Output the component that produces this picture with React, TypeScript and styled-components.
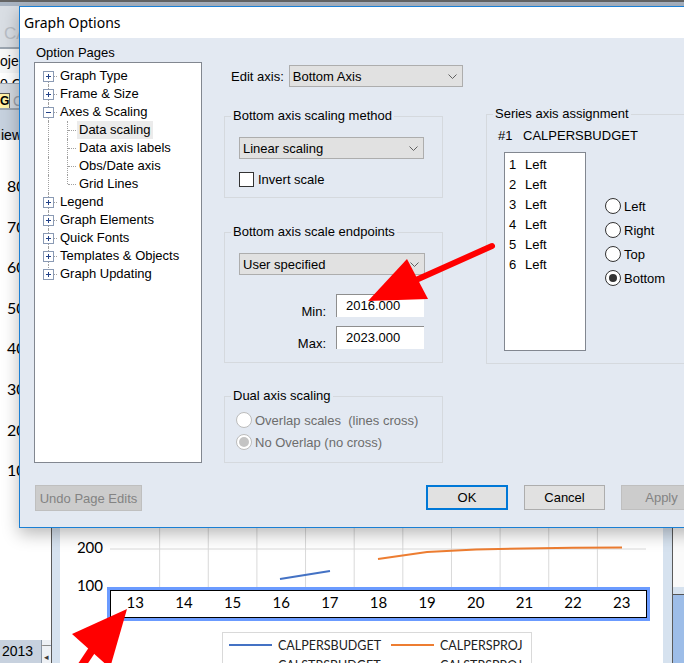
import React from 'react'
import styled, { createGlobalStyle } from 'styled-components'

const UI = `"Liberation Sans", Arial, sans-serif`
const CHART = `Lato, "Liberation Sans", sans-serif`

const GlobalStyle = createGlobalStyle`
  html, body { margin: 0; padding: 0; }
  body { background: #ffffff; overflow: hidden; }
  * { box-sizing: border-box; }
`

type OptionPage = { label: string; open?: boolean; children?: string[] }

const PAGES: OptionPage[] = [
    { label: 'Graph Type' },
    { label: 'Frame & Size' },
    { label: 'Axes & Scaling', open: true, children: ['Data scaling', 'Data axis labels', 'Obs/Date axis', 'Grid Lines'] },
    { label: 'Legend' },
    { label: 'Graph Elements' },
    { label: 'Quick Fonts' },
    { label: 'Templates & Objects' },
    { label: 'Graph Updating' },
]
const SELECTED_PAGE = 'Data scaling'
const SERIES = [1, 2, 3, 4, 5, 6]
const YEARS = [13, 14, 15, 16, 17, 18, 19, 20, 21, 22, 23]
const SIDE_TICKS = ['80', '70', '60', '50', '40', '30', '20', '10']

/* ---------- background application ---------- */

const Page = styled.div`
    position: relative;
    width: 684px;
    height: 663px;
    overflow: hidden;
    display: flex;
    flex-direction: column;
    background: #ffffff;
    font-family: ${UI};
    color: #000;
`

const TopStrip = styled.div`
    flex: none;
    height: 6px;
    background: linear-gradient(#646464 0 2px, #aab5c3 2px);
`

const Ribbon = styled.div`
    flex: none;
    display: flex;
    flex-direction: column;
`

const RibbonBand = styled.div<{ $h: number; $bg: string; $pad: number }>`
    flex: none;
    display: flex;
    align-items: flex-start;
    gap: 3px;
    height: ${p => p.$h}px;
    padding-top: ${p => p.$pad}px;
    background: ${p => p.$bg};
    overflow: hidden;
    white-space: nowrap;
`

const RibbonRule = styled.div<{ $h: number }>`
    flex: none;
    height: ${p => p.$h}px;
    background: #9ba5b0;
`

const BandText = styled.span<{ $color?: string; $size?: number; $indent?: number }>`
    padding-left: ${p => p.$indent ?? 0}px;
    font-size: ${p => p.$size ?? 14}px;
    line-height: 16px;
    color: ${p => p.$color ?? '#000'};
`

const KeyTip = styled.span`
    flex: none;
    width: 10px;
    height: 17px;
    padding-right: 1px;
    text-align: right;
    font-size: 12px;
    font-weight: bold;
    line-height: 15px;
    background: #fff2a6;
    border: 1px solid #5a5a5a;
    border-left: none;
    overflow: hidden;
`

const Workspace = styled.div`
    flex: 1;
    display: flex;
    min-height: 0;
`

const SidePane = styled.div`
    flex: none;
    width: 52px;
    display: flex;
    flex-direction: column;
    border-right: 1px solid #5a5a5a;
    background: #fff;
`

const SideTicks = styled.div`
    padding-top: 26px;
    font-family: ${CHART};
    font-size: 16px;
`

const SideTick = styled.div`
    height: 40.6px;
    line-height: 40.6px;
    padding-left: 7px;
`

const SheetBar = styled.div`
    margin-top: auto;
    display: flex;
    height: 23px;
`

const SheetTab = styled.div`
    width: 42px;
    padding-left: 2px;
    font-size: 14px;
    line-height: 23px;
    background: #c7d1de;
`

const SheetSpin = styled.div`
    flex: 1;
    display: flex;
    flex-direction: column;
    align-items: center;
    justify-content: space-around;
    font-size: 9px;
    line-height: 9px;
    color: #3a3a3a;
    background: #eef1f5;
    border-left: 1px solid #8a96a5;
`

const ChartFrame = styled.div`
    flex: 1;
    display: flex;
    padding: 0 9px 0 8px;
    background: #d6e2ef;
`

const ChartPane = styled.div`
    flex: 1;
    display: flex;
    flex-direction: column;
    background: #fff;
`

const PlotSvg = styled.svg`
    display: block;
    flex: none;
    overflow: visible;
`

const AxisBox = styled.div`
    flex: none;
    width: 543px;
    height: 34px;
    margin-left: 47px;
    border: 3px solid #6b9bff;
`

const AxisInner = styled.div`
    height: 100%;
    display: grid;
    grid-template-columns: repeat(11, 1fr);
    align-items: center;
    padding-bottom: 4px;
    border: 1px solid #000;
    font-family: ${CHART};
    font-size: 15px;
    text-align: center;
`

const Legend = styled.div`
    flex: none;
    width: 310px;
    margin: 11px 0 0 162px;
    padding: 2px 0 0 6px;
    display: grid;
    grid-template-columns: 162px 1fr;
    border: 1px solid #d9d9d9;
`

const LegendItem = styled.div`
    display: flex;
    align-items: center;
    gap: 6px;
    height: 20px;
    font-family: ${CHART};
    font-size: 12.5px;
    color: #222;
`

const Swatch = styled.span<{ $color: string }>`
    flex: none;
    width: 43px;
    height: 2px;
    background: ${p => p.$color};
`

const RightPane = styled.div`
    flex: none;
    width: 12px;
    display: flex;
    flex-direction: column;
    border-left: 1px solid #5a5a5a;
`

const RightTop = styled.div`
    flex: 1;
    background: #fafafa;
`

const RightStrip = styled.div`
    height: 7px;
    background: #d6e2ef;
`

const RightBottom = styled.div`
    height: 69px;
    border-top: 1px solid #555;
    background: #9dbde8;
`

/* ---------- dialog ---------- */

const Dialog = styled.section`
    position: absolute;
    left: 19px;
    top: 6px;
    z-index: 1;
    width: 698px;
    height: 522px;
    display: flex;
    flex-direction: column;
    border: 1px solid #1a7fd4;
    background: #e3e9f2;
    box-shadow: 0 6px 16px rgba(0, 0, 0, 0.28);
    font-size: 13px;
`

const TitleBar = styled.header`
    flex: none;
    height: 31px;
    padding-left: 4px;
    line-height: 31px;
    background: #fff;
    font-family: "Noto Sans", sans-serif;
    font-size: 14px;
`

const DialogBody = styled.div`
    flex: 1;
    display: flex;
    flex-direction: column;
    padding: 6px 14px 16px;
`

const MainRow = styled.div`
    display: flex;
    align-items: flex-start;
`

const PagesColumn = styled.div`
    flex: none;
    width: 168px;
    display: flex;
    flex-direction: column;
`

const PanelLabel = styled.div`
    line-height: 17px;
    padding-left: 2px;
    margin-bottom: 1px;
`

const Tree = styled.ul`
    height: 401px;
    margin: 0;
    padding: 4px 0 0;
    list-style: none;
    background: #fff;
    border: 1px solid #828790;
`

const TreeRow = styled.li`
    display: flex;
    height: 18px;
    white-space: nowrap;
`

const Connector = styled.span<{ $w: number; $x: number; $top: number; $bottom: number; $branch: boolean }>`
    position: relative;
    flex: none;
    width: ${p => p.$w}px;

    &::before {
        content: '';
        position: absolute;
        left: ${p => p.$x}px;
        top: ${p => p.$top}px;
        bottom: ${p => p.$bottom}px;
        border-left: 1px dotted #a0a0a0;
    }
    &::after {
        content: '';
        display: ${p => (p.$branch ? 'block' : 'none')};
        position: absolute;
        left: ${p => p.$x + 1}px;
        right: 1px;
        top: 9px;
        border-top: 1px dotted #a0a0a0;
    }
`

const BoxSvg = styled.svg`
    position: absolute;
    left: 8px;
    top: 4px;
    z-index: 1;
`

const NodeLabel = styled.span<{ $selected?: boolean }>`
    padding: 0 2px;
    line-height: 18px;
    background: ${p => (p.$selected ? '#ebebeb' : 'transparent')};
`

const EditPanel = styled.div`
    flex: 1;
    margin-left: 22px;
    display: flex;
    flex-direction: column;
`

const EditRow = styled.div`
    display: flex;
    align-items: center;
    gap: 5px;
    margin-top: 21px;
    padding-left: 7px;
`

const Dropdown = styled.div<{ $w: number }>`
    display: flex;
    align-items: center;
    width: ${p => p.$w}px;
    height: 22px;
    padding: 0 5px 0 3px;
    background: #e1e1e1;
    border: 1px solid #adadad;
    white-space: nowrap;
`

const ChevronSvg = styled.svg`
    flex: none;
    margin-left: auto;
`

const Columns = styled.div`
    display: flex;
    align-items: flex-start;
    margin-top: 19px;
`

const GroupColumn = styled.div`
    flex: none;
    width: 219px;
    margin-top: 2px;
    display: flex;
    flex-direction: column;
`

const Group = styled.fieldset<{ $gap?: number }>`
    min-width: 0;
    margin: ${p => p.$gap ?? 0}px 0 0;
    padding: 0;
    border: 1px solid #d5d9de;

    legend {
        margin-left: 6px;
        padding: 0 2px;
        line-height: 16px;
    }
`

const GroupBody = styled.div<{ $pad: string }>`
    display: flex;
    flex-direction: column;
    padding: ${p => p.$pad};
`

const CheckRow = styled.label`
    display: flex;
    align-items: center;
    gap: 4px;
    height: 15px;
    margin-top: 13px;
`

const CheckBox = styled.span`
    flex: none;
    width: 15px;
    height: 15px;
    background: #fff;
    border: 1px solid #333;
`

const FieldRow = styled.div<{ $gap: number }>`
    display: flex;
    gap: 10px;
    height: 25px;
    margin-top: ${p => p.$gap}px;
`

const FieldLabel = styled.span`
    width: 87px;
    align-self: flex-end;
    text-align: right;
    line-height: 14px;
`

const NumberBox = styled.div`
    width: 88px;
    height: 23px;
    padding-left: 9px;
    line-height: 22px;
    background: #fff;
    border-top: 1px solid #8e8e8e;
    border-left: 1px solid #8e8e8e;
`

const RadioStack = styled.div<{ $gap: number }>`
    display: flex;
    flex-direction: column;
    gap: ${p => p.$gap}px;
`

const RadioRow = styled.label<{ $disabled?: boolean }>`
    display: flex;
    align-items: center;
    gap: 3px;
    height: 16px;
    white-space: pre;
    color: ${p => (p.$disabled ? '#6d6d6d' : '#000')};
`

const RadioDot = styled.span<{ $checked?: boolean; $disabled?: boolean }>`
    flex: none;
    display: grid;
    place-items: center;
    width: 16px;
    height: 16px;
    border-radius: 50%;
    background: #fff;
    border: 1px solid ${p => (p.$disabled ? '#bcbcbc' : '#333')};

    &::after {
        content: '';
        display: ${p => (p.$checked ? 'block' : 'none')};
        width: ${p => (p.$disabled ? 10 : 8)}px;
        height: ${p => (p.$disabled ? 10 : 8)}px;
        border-radius: 50%;
        background: ${p => (p.$disabled ? '#c4c4c4' : '#333')};
    }
`

const SeriesGroup = styled(Group)`
    flex: 1;
    margin-left: 43px;
`

const SeriesCaption = styled.div`
    display: flex;
    line-height: 16px;
`

const CaptionNo = styled.span`
    width: 25px;
`

const SeriesRow = styled.div`
    display: flex;
    align-items: flex-start;
    margin-top: 8px;
`

const ListBox = styled.ul`
    flex: none;
    width: 82px;
    height: 199px;
    margin: 0 0 0 6px;
    padding: 2px 0 0 4px;
    list-style: none;
    background: #fff;
    border: 1px solid #828790;
`

const ListItem = styled.li`
    display: flex;
    height: 20px;
    line-height: 20px;
`

const ItemNo = styled.span`
    width: 16px;
`

const SideRadios = styled(RadioStack)`
    margin: 46px 0 0 19px;
`

const Footer = styled.div`
    display: flex;
    align-items: flex-start;
    margin-top: 22px;
`

const ButtonGroup = styled.div`
    display: flex;
    gap: 16px;
    margin-left: auto;
`

const Button = styled.button<{ $w: number; $h?: number; $kind?: 'default' | 'disabled' }>`
    width: ${p => p.$w}px;
    height: ${p => p.$h ?? 25}px;
    padding: 0;
    font-family: ${UI};
    font-size: 13px;
    color: ${p => (p.$kind === 'disabled' ? '#838383' : '#000')};
    background: ${p => (p.$kind === 'disabled' ? '#cccccc' : '#e1e1e1')};
    border: ${p =>
        p.$kind === 'default' ? '2px solid #0078d7' : p.$kind === 'disabled' ? '1px solid #bfbfbf' : '1px solid #adadad'};
`

const UndoButton = styled(Button)`
    margin-left: 1px;
`

const Annotations = styled.svg`
    position: absolute;
    left: 0;
    top: 0;
    z-index: 2;
    pointer-events: none;
`

/* ---------- pieces ---------- */

const ExpandBox = ({ open }: { open: boolean }) => (
    <BoxSvg width="11" height="11" viewBox="0 0 11 11">
        <rect x="0.5" y="0.5" width="10" height="10" fill="#fff" stroke="#8a9ab4" />
        <path d={open ? 'M3 5.5H8' : 'M3 5.5H8M5.5 3V8'} stroke="#234288" strokeWidth="1" />
    </BoxSvg>
)

const Select = ({ value, width }: { value: string; width: number }) => (
    <Dropdown $w={width}>
        {value}
        <ChevronSvg width="9" height="5" viewBox="0 0 9 5">
            <path d="M0.5 0.5L4.5 4.5L8.5 0.5" fill="none" stroke="#606060" />
        </ChevronSvg>
    </Dropdown>
)

const OptionTree = () => {
    const rows: React.ReactNode[] = []
    PAGES.forEach((page, i) => {
        rows.push(
            <TreeRow key={page.label}>
                <Connector $w={23} $x={13} $top={i === 0 ? 9 : 0} $bottom={i === PAGES.length - 1 ? 9 : 0} $branch>
                    <ExpandBox open={!!page.open} />
                </Connector>
                <NodeLabel>{page.label}</NodeLabel>
            </TreeRow>
        )
        const kids = page.children ?? []
        kids.forEach((child, j) => {
            rows.push(
                <TreeRow key={child}>
                    <Connector $w={23} $x={13} $top={0} $bottom={0} $branch={false} />
                    <Connector $w={19} $x={9} $top={0} $bottom={j === kids.length - 1 ? 9 : 0} $branch />
                    <NodeLabel $selected={child === SELECTED_PAGE}>{child}</NodeLabel>
                </TreeRow>
            )
        })
    })
    return <Tree>{rows}</Tree>
}

// plot drawn in page coordinates; only the part below the dialog is visible
const gridX = Array.from({ length: 10 }, (_, i) => 111 + 48.64 * (i + 1))
const gridY = Array.from({ length: 11 }, (_, i) => 549 - 38 * i)
const yTicks = [{ y: 547, label: '200' }, { y: 585, label: '100' }]

const Plot = () => (
    <PlotSvg width="603" height="447" viewBox="60 140 603 447">
        {gridY.map(y => (
            <line key={y} x1="110" x2="646" y1={y} y2={y} stroke="#d9d9d9" />
        ))}
        {gridX.map(x => (
            <line key={x} x1={x} x2={x} y1="150" y2="587" stroke="#d9d9d9" />
        ))}
        {yTicks.map(t => (
            <text key={t.label} x="103" y={t.y} textAnchor="end" dominantBaseline="central"
                  fontFamily="Lato, sans-serif" fontSize="15" fill="#000">{t.label}</text>
        ))}
        <polyline points="280,579 330,571" fill="none" stroke="#4472c4" strokeWidth="2" />
        <polyline points="378,559 427,552 476,549.5 524,548.5 573,547.8 622,547.4"
                  fill="none" stroke="#ed7d31" strokeWidth="2" />
    </PlotSvg>
)

export default function App() {
    return (
        <>
            <GlobalStyle />
            <Page>
                <TopStrip />
                <Ribbon>
                    <RibbonBand $h={41} $bg="#d9dee4" $pad={20}>
                        <BandText $color="#b8bdc4" $size={17} $indent={4}>CAL</BandText>
                    </RibbonBand>
                    <RibbonRule $h={2} />
                    <RibbonBand $h={24} $bg="#f6f7f8" $pad={4}>
                        <BandText>ojects</BandText>
                    </RibbonBand>
                    <RibbonBand $h={10} $bg="#ffffff" $pad={3}>
                        <BandText>0 C</BandText>
                    </RibbonBand>
                    <RibbonRule $h={1} />
                    <RibbonBand $h={24} $bg="#d2d8df" $pad={9}>
                        <KeyTip>G</KeyTip>
                        <BandText $color="#9aa0a8">C</BandText>
                    </RibbonBand>
                    <RibbonRule $h={2} />
                    <RibbonBand $h={30} $bg="#c6d1de" $pad={17}>
                        <BandText $indent={1}>iew</BandText>
                    </RibbonBand>
                </Ribbon>
                <Workspace>
                    <SidePane>
                        <SideTicks>
                            {SIDE_TICKS.map(t => <SideTick key={t}>{t}</SideTick>)}
                        </SideTicks>
                        <SheetBar>
                            <SheetTab>2013</SheetTab>
                            <SheetSpin><span>—</span><span>◂</span></SheetSpin>
                        </SheetBar>
                    </SidePane>
                    <ChartFrame>
                        <ChartPane>
                            <Plot />
                            <AxisBox>
                                <AxisInner>
                                    {YEARS.map(y => <span key={y}>{y}</span>)}
                                </AxisInner>
                            </AxisBox>
                            <Legend>
                                <LegendItem><Swatch $color="#4472c4" />CALPERSBUDGET</LegendItem>
                                <LegendItem><Swatch $color="#ed7d31" />CALPERSPROJ</LegendItem>
                                <LegendItem><Swatch $color="#a5a5a5" />CALSTRSBUDGET</LegendItem>
                                <LegendItem><Swatch $color="#ffc000" />CALSTRSPROJ</LegendItem>
                            </Legend>
                        </ChartPane>
                    </ChartFrame>
                    <RightPane>
                        <RightTop />
                        <RightStrip />
                        <RightBottom />
                    </RightPane>
                </Workspace>

                <Dialog>
                    <TitleBar>Graph Options</TitleBar>
                    <DialogBody>
                        <MainRow>
                            <PagesColumn>
                                <PanelLabel>Option Pages</PanelLabel>
                                <OptionTree />
                            </PagesColumn>
                            <EditPanel>
                                <EditRow>
                                    <span>Edit axis:</span>
                                    <Select value="Bottom Axis" width={174} />
                                </EditRow>
                                <Columns>
                                    <GroupColumn>
                                        <Group>
                                            <legend>Bottom axis scaling method</legend>
                                            <GroupBody $pad="13px 14px 10px">
                                                <Select value="Linear scaling" width={185} />
                                                <CheckRow><CheckBox />Invert scale</CheckRow>
                                            </GroupBody>
                                        </Group>
                                        <Group $gap={26}>
                                            <legend>Bottom axis scale endpoints</legend>
                                            <GroupBody $pad="13px 14px 11px">
                                                <Select value="User specified" width={186} />
                                                <FieldRow $gap={19}>
                                                    <FieldLabel>Min:</FieldLabel>
                                                    <NumberBox>2016.000</NumberBox>
                                                </FieldRow>
                                                <FieldRow $gap={7}>
                                                    <FieldLabel>Max:</FieldLabel>
                                                    <NumberBox>2023.000</NumberBox>
                                                </FieldRow>
                                            </GroupBody>
                                        </Group>
                                        <Group $gap={25}>
                                            <legend>Dual axis scaling</legend>
                                            <GroupBody $pad="8px 11px 12px">
                                                <RadioStack $gap={6}>
                                                    <RadioRow $disabled><RadioDot $disabled />Overlap scales  (lines cross)</RadioRow>
                                                    <RadioRow $disabled><RadioDot $disabled $checked />No Overlap (no cross)</RadioRow>
                                                </RadioStack>
                                            </GroupBody>
                                        </Group>
                                    </GroupColumn>
                                    <SeriesGroup>
                                        <legend>Series axis assignment</legend>
                                        <GroupBody $pad="6px 11px 12px">
                                            <SeriesCaption><CaptionNo>#1</CaptionNo>CALPERSBUDGET</SeriesCaption>
                                            <SeriesRow>
                                                <ListBox>
                                                    {SERIES.map(n => (
                                                        <ListItem key={n}><ItemNo>{n}</ItemNo>Left</ListItem>
                                                    ))}
                                                </ListBox>
                                                <SideRadios $gap={8}>
                                                    <RadioRow><RadioDot />Left</RadioRow>
                                                    <RadioRow><RadioDot />Right</RadioRow>
                                                    <RadioRow><RadioDot />Top</RadioRow>
                                                    <RadioRow><RadioDot $checked />Bottom</RadioRow>
                                                </SideRadios>
                                            </SeriesRow>
                                        </GroupBody>
                                    </SeriesGroup>
                                </Columns>
                            </EditPanel>
                        </MainRow>
                        <Footer>
                            <UndoButton $w={107} $h={26} $kind="disabled">Undo Page Edits</UndoButton>
                            <ButtonGroup>
                                <Button $w={82} $kind="default">OK</Button>
                                <Button $w={81}>Cancel</Button>
                                <Button $w={81} $kind="disabled">Apply</Button>
                            </ButtonGroup>
                        </Footer>
                    </DialogBody>
                </Dialog>

                <Annotations width="684" height="663" viewBox="0 0 684 663">
                    <line x1="416" y1="280" x2="492" y2="246" stroke="#ff0000" strokeWidth="6" strokeLinecap="round" />
                    <polygon points="368,301 407,259 428,299" fill="#ff0000" />
                    <line x1="92" y1="650" x2="72" y2="680" stroke="#ff0000" strokeWidth="8" />
                    <polygon points="127,609 72,634 110,668" fill="#ff0000" />
                </Annotations>
            </Page>
        </>
    )
}
